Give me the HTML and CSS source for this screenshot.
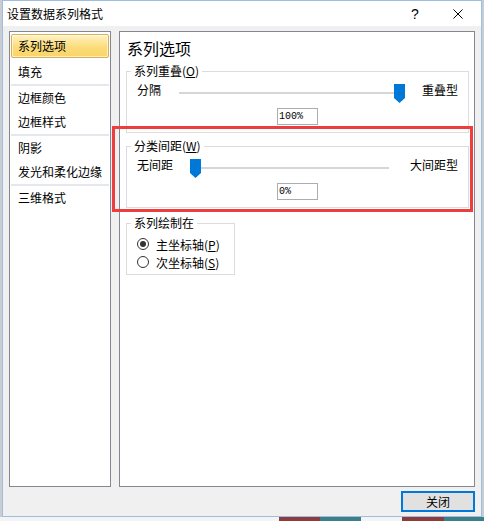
FILE: index.html
```html
<!DOCTYPE html>
<html lang="zh-CN">
<head>
  <meta charset="UTF-8">
  <title>设置数据系列格式</title>
  <link rel="stylesheet" href="styles.css">
</head>
<body>
  <div class="dialog">
    <div class="titlebar">
      <span class="title">设置数据系列格式</span>
      <div class="caption-buttons">
        <span class="cap-btn help">?</span>
        <span class="cap-btn close">
          <svg width="10" height="10" viewBox="0 0 10 10"><path d="M0.5 0.5 L9.5 9.5 M9.5 0.5 L0.5 9.5" stroke="#000" stroke-width="1" fill="none"/></svg>
        </span>
      </div>
    </div>

    <div class="dialog-body">
      <div class="panes">
        <ul class="nav">
          <li class="nav-item selected">系列选项</li>
          <li class="nav-item">填充</li>
          <li class="nav-sep"></li>
          <li class="nav-item">边框颜色</li>
          <li class="nav-item">边框样式</li>
          <li class="nav-sep"></li>
          <li class="nav-item">阴影</li>
          <li class="nav-item">发光和柔化边缘</li>
          <li class="nav-sep"></li>
          <li class="nav-item">三维格式</li>
        </ul>

        <div class="content">
          <h2 class="heading">系列选项</h2>

          <div class="group">
            <span class="group-title">系列重叠(<u>O</u>)</span>
            <div class="slider-row">
              <span class="slider-label">分隔</span>
              <div class="slider" style="--pos: 1">
                <svg class="thumb" width="11" height="19" viewBox="0 0 11 19"><polygon points="0,0 11,0 11,14 5.5,19 0,14" fill="#0078d7"/></svg>
              </div>
              <span class="slider-label">重叠型</span>
            </div>
            <div class="value">100%</div>
          </div>

          <div class="group">
            <span class="group-title">分类间距(<u>W</u>)</span>
            <div class="slider-row">
              <span class="slider-label">无间距</span>
              <div class="slider" style="--pos: 0">
                <svg class="thumb" width="11" height="19" viewBox="0 0 11 19"><polygon points="0,0 11,0 11,14 5.5,19 0,14" fill="#0078d7"/></svg>
              </div>
              <span class="slider-label">大间距型</span>
            </div>
            <div class="value">0%</div>
          </div>

          <div class="group group-small">
            <span class="group-title">系列绘制在</span>
            <div class="radio-row">
              <span class="radio checked"></span>
              <span>主坐标轴(<u>P</u>)</span>
            </div>
            <div class="radio-row">
              <span class="radio"></span>
              <span>次坐标轴(<u>S</u>)</span>
            </div>
          </div>

          <div class="highlight"></div>
        </div>
      </div>

      <div class="footer">
        <button class="btn-close">关闭</button>
      </div>
    </div>
  </div>

  <div class="strip">
    <span class="strip-block light"></span>
    <span class="strip-block red"></span>
    <span class="strip-block teal"></span>
    <span class="strip-block pale"></span>
    <span class="strip-block red"></span>
    <span class="strip-block teal"></span>
  </div>
</body>
</html>
```

FILE: styles.css
```css
body {
  margin: 0;
  padding: 0;
  background-color: #c9cdd2;
  font-family: "Noto Sans CJK SC", "Liberation Sans", sans-serif;
  font-size: 12px;
  color: #000;
  width: 484px;
  height: 521px;
  overflow: hidden;
}

.dialog {
  box-sizing: border-box;
  width: 480px;
  height: 517px;
  margin-left: 2px;
  border: 1px solid #9dbde2;
  background-color: #f0f0f0;
}

/* title bar */
.titlebar {
  height: 25px;
  display: flex;
  align-items: center;
  background-color: #fff;
}

.title {
  padding-left: 4px;
  line-height: 16px;
}

.caption-buttons {
  margin-left: auto;
  display: flex;
  height: 100%;
}

.cap-btn {
  display: flex;
  align-items: center;
  justify-content: center;
  height: 100%;
}

.cap-btn.help {
  width: 40px;
  font-family: "Liberation Sans", sans-serif;
  font-size: 14px;
}

.cap-btn.close {
  width: 46px;
}

/* body */
.dialog-body {
  padding: 5px 6px 4px;
}

.panes {
  display: flex;
  gap: 8px;
  height: 456px;
}

.nav {
  box-sizing: border-box;
  width: 102px;
  margin: 0;
  padding: 2px 0 0;
  list-style: none;
  background-color: #fff;
  border: 1px solid #828790;
}

.nav-item {
  box-sizing: border-box;
  height: 24px;
  margin: 0 1px;
  padding-left: 6px;
  border: 1px solid transparent;
  line-height: 22px;
  white-space: nowrap;
}

.nav-item.selected {
  margin-bottom: 2px;
  border-color: #dcac56;
  border-radius: 2px;
  background: linear-gradient(#fff3c4, #fbdc7a 55%, #f9d567);
  box-shadow: inset 0 0 0 1px rgba(255, 255, 255, 0.6);
}

.nav-sep {
  height: 2px;
  margin: 0 1px;
  background-color: #e6e7ec;
}

.content {
  position: relative;
  box-sizing: border-box;
  flex: 1;
  padding: 6px 5px 0 6px;
  background-color: #fff;
  border: 1px solid #828790;
}

.heading {
  margin: 0;
  padding-left: 1px;
  font-size: 16px;
  font-weight: normal;
  line-height: 20px;
}

/* group boxes */
.group {
  position: relative;
  box-sizing: border-box;
  margin-top: 13px;
  padding: 11px 0 7px;
  border: 1px solid #dcdcdc;
}

.group-small {
  width: 109px;
  margin-top: 15px;
  padding: 11px 0 3px 10px;
}

.group-title {
  position: absolute;
  top: -8px;
  left: 4px;
  padding: 0 3px;
  background-color: #fff;
  line-height: 14px;
  white-space: nowrap;
}

.slider-row {
  display: flex;
  align-items: flex-start;
  gap: 15px;
  height: 20px;
  padding: 0 10px;
}

.slider-label {
  line-height: 14px;
  white-space: nowrap;
}

.slider {
  position: relative;
  flex: 1;
  height: 19px;
  margin-top: 1px;
}

.slider::before {
  content: "";
  position: absolute;
  left: 3px;
  right: 6px;
  top: 8px;
  height: 2px;
  background-color: #d6d6d6;
}

.thumb {
  position: absolute;
  top: 0;
  left: calc((100% - 15px) * var(--pos) + 2px);
}

.value {
  box-sizing: border-box;
  width: 41px;
  height: 17px;
  margin: 5px auto 0;
  padding-left: 1px;
  border: 1px solid #abadb3;
  font-family: "Liberation Mono", monospace;
  font-size: 10px;
  line-height: 15px;
}

.radio-row {
  display: flex;
  align-items: center;
  gap: 7px;
  height: 18px;
  white-space: nowrap;
}

.radio {
  box-sizing: border-box;
  width: 12px;
  height: 12px;
  border: 1px solid #333;
  border-radius: 50%;
  display: flex;
  align-items: center;
  justify-content: center;
}

.radio.checked::after {
  content: "";
  width: 6px;
  height: 6px;
  border-radius: 50%;
  background-color: #333;
}

.highlight {
  position: absolute;
  left: -8px;
  top: 94px;
  width: 361px;
  height: 86px;
  box-sizing: border-box;
  border: 3px solid #ee3d3d;
}

/* footer */
.footer {
  display: flex;
  justify-content: flex-end;
  margin-top: 4px;
}

.btn-close {
  box-sizing: border-box;
  width: 74px;
  height: 21px;
  padding: 0;
  background-color: #e1e1e1;
  border: 2px solid #0078d7;
  font-family: "Noto Sans CJK SC", sans-serif;
  font-size: 12px;
  line-height: 15px;
  color: #000;
}

/* background app strip under the dialog */
.strip {
  display: flex;
  height: 4px;
}

.strip-block {
  display: block;
  height: 100%;
}

.strip-block.light { width: 283px; background-color: #f4f4f4; }
.strip-block.red { width: 42px; background-color: #8e3b3b; }
.strip-block.teal { width: 41px; background-color: #3b7f88; }
.strip-block.pale { width: 42px; background-color: #f4f4f4; }
```
